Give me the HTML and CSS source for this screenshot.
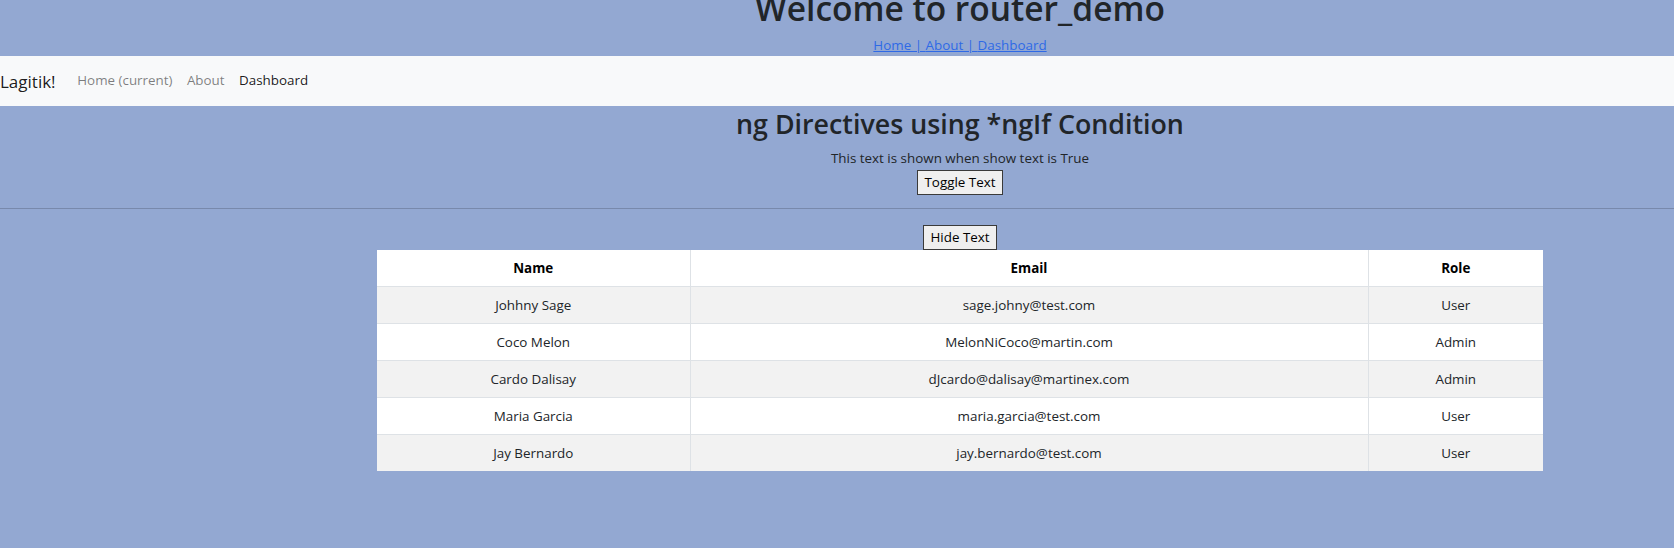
FILE: index.html
```html
<!DOCTYPE html>
<html lang="en">
<head>
<meta charset="utf-8">
<title>router_demo</title>
<link rel="stylesheet" href="styles.css">
</head>
<body>
<div class="page">
  <header class="site-header">
    <h1 class="site-title">Welcome to router_demo</h1>
    <nav class="quick-links"><a href="#">Home | </a><a href="#">About | </a><a href="#">Dashboard</a></nav>
  </header>

  <nav class="navbar">
    <a class="brand" href="#">Lagitik!</a>
    <ul class="nav-list">
      <li><a class="nav-link" href="#">Home (current)</a></li>
      <li><a class="nav-link" href="#">About</a></li>
      <li><a class="nav-link active" href="#">Dashboard</a></li>
    </ul>
  </nav>

  <section class="directives">
    <h2 class="section-title">ng Directives using *ngIf Condition</h2>
    <p class="shown-text">This text is shown when show text is True</p>
    <button class="plain-btn" type="button">Toggle Text</button>
  </section>

  <hr class="divider">

  <section class="users">
    <button class="plain-btn" type="button">Hide Text</button>
    <table class="user-table">
      <colgroup>
        <col class="col-name">
        <col class="col-email">
        <col class="col-role">
      </colgroup>
      <thead>
        <tr><th>Name</th><th>Email</th><th>Role</th></tr>
      </thead>
      <tbody>
        <tr><td>Johhny Sage</td><td>sage.johny@test.com</td><td>User</td></tr>
        <tr><td>Coco Melon</td><td>MelonNiCoco@martin.com</td><td>Admin</td></tr>
        <tr><td>Cardo Dalisay</td><td>dJcardo@dalisay@martinex.com</td><td>Admin</td></tr>
        <tr><td>Maria Garcia</td><td>maria.garcia@test.com</td><td>User</td></tr>
        <tr><td>Jay Bernardo</td><td>jay.bernardo@test.com</td><td>User</td></tr>
      </tbody>
    </table>
  </section>
</div>
</body>
</html>
```

FILE: styles.css
```css
html, body {
  margin: 0;
  padding: 0;
  overflow: hidden;
  background: #93a8d2;
}

body {
  font-family: "Open Sans", "Noto Sans", sans-serif;
  font-size: 13.4px;
  line-height: 21.6px;
  color: #212529;
}

/* content column is centred at x=960 (app laid out wider than the window) */
.page {
  padding-left: 246px;
}

.site-header {
  display: flex;
  flex-direction: column;
  align-items: center;
}

.site-title {
  margin: -13px 0 0;
  font-size: 33.5px;
  line-height: 43.2px;
  font-weight: 600;
  color: #212529;
  white-space: nowrap;
}

.quick-links {
  margin-top: 3.8px;
  line-height: 22px;
}

.quick-links a {
  color: #2f6ae6;
  text-decoration: underline;
  white-space: pre;
}

.navbar {
  display: flex;
  align-items: center;
  height: 50px;
  margin-left: -246px;
  background: #f8f9fa;
  padding: 0;
}

.brand {
  font-size: 17px;
  line-height: 27px;
  color: rgba(0, 0, 0, 0.9);
  text-decoration: none;
  margin-right: 14.4px;
}

.nav-list {
  display: flex;
  list-style: none;
  margin: 0;
  padding: 0;
}

.nav-link {
  display: block;
  padding: 0 7.2px;
  color: rgba(0, 0, 0, 0.5);
  text-decoration: none;
}

.nav-link.active {
  color: rgba(0, 0, 0, 0.9);
}

.directives {
  display: flex;
  flex-direction: column;
  align-items: center;
}

.section-title {
  margin: 1px 0 6px;
  font-size: 26.8px;
  line-height: 34.56px;
  font-weight: 600;
  color: #212529;
}

.shown-text {
  margin: 0 0 1px;
}

.plain-btn {
  font-family: "Open Sans", "Noto Sans", sans-serif;
  font-size: 13.4px;
  line-height: 21px;
  padding: 1px 6px;
  margin: 0;
  border: 1px solid #3a3a3a;
  background: #efefef;
  color: #000;
  border-radius: 0;
}

.divider {
  margin: 13px 0 16px -246px;
  border: 0;
  border-top: 1px solid rgba(0, 0, 0, 0.18);
  height: 0;
}

.users {
  display: flex;
  flex-direction: column;
  align-items: center;
}

.user-table {
  width: 1166px;
  table-layout: fixed;
  border-collapse: collapse;
  background: #fff;
  color: #212529;
}

.col-name { width: 313px; }
.col-email { width: 678px; }
.col-role { width: 175px; }

.user-table th,
.user-table td {
  padding: 7px;
  line-height: 22px;
  text-align: center;
  border-top: 1px solid #dee2e6;
}

.user-table th + th,
.user-table td + td {
  border-left: 1px solid #dee2e6;
}

.user-table thead th {
  border-top: 0;
  font-weight: 700;
  color: #000;
}

.user-table tbody tr:nth-child(odd) {
  background: #f2f2f2;
}
```
